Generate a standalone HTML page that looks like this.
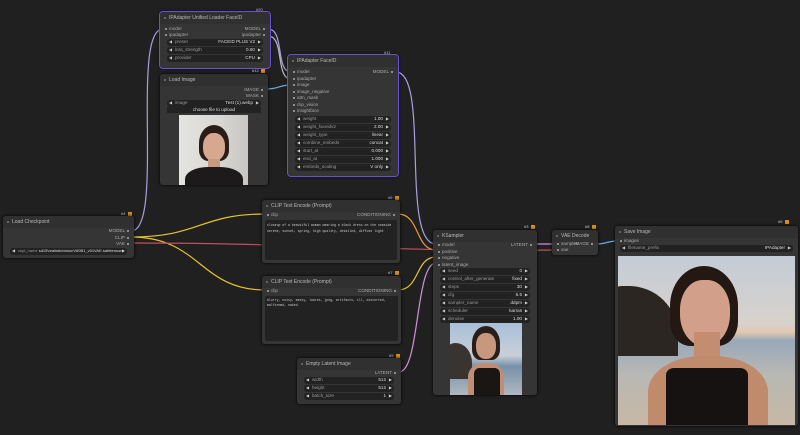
<!DOCTYPE html>
<html><head><meta charset="utf-8"><style>
*{margin:0;padding:0;box-sizing:border-box}
body{width:800px;height:435px;background:#202020;overflow:hidden;position:relative;font-family:"Liberation Sans",sans-serif;font-size:4.6px;color:#aaa}
.n{position:absolute;background:#353535;border-radius:3px;box-shadow:0 0 3px #000}
.n.sel{outline:1.5px solid #6b4fd8}
.t{height:12px;line-height:12px;padding-left:9px;color:#b8b8b8;font-size:5px;position:relative;background:#303030;border-radius:3px 3px 0 0}
.t:before{content:"";position:absolute;left:4px;top:5px;width:2px;height:2px;background:#777;border-radius:50%}
.r{position:absolute;left:0;right:0;height:6px;line-height:6px}
.in{position:absolute;left:5px;padding-left:4px}
.in:before{content:"";position:absolute;left:0;top:2px;width:2px;height:2px;background:#aaa;border-radius:50%}
.out{position:absolute;right:5px;padding-right:4px}
.out:after{content:"";position:absolute;right:0;top:2px;width:2px;height:2px;background:#aaa;border-radius:50%}
.w{position:absolute;left:7px;right:7px;height:6.5px;line-height:6.5px;background:#222;border-radius:3px;padding:0 8px;color:#999;white-space:nowrap;overflow:hidden}
.w:before{content:"◀";position:absolute;left:2px;font-size:4px;color:#ccc}
.w:after{content:"▶";position:absolute;right:2px;font-size:4px;color:#ccc}
.w b{position:absolute;right:8px;font-weight:normal;color:#ddd}
.id{position:absolute;font-size:4px;color:#ccc}
.id i{display:inline-block;width:4px;height:4px;background:#d98c1a;margin-left:1px;vertical-align:middle}
.ta{position:absolute;left:3px;right:3px;background:#222;font-family:"Liberation Mono",monospace;font-size:3.2px;color:#ccc;padding:2px;line-height:6px;border-radius:2px;white-space:nowrap;overflow:hidden}
</style></head><body>
<svg width="800" height="435" style="position:absolute;left:0;top:0" fill="none" stroke-width="1.2">
<path d="M131 231 C165 231 130 29 163 29" stroke="#a8a0e0"/>
<path d="M268 29 C285 29 275 72 291 72" stroke="#a8a0e0"/>
<path d="M268 36 C285 36 275 79 291 79" stroke="#bbb"/>
<path d="M266 89 C280 89 278 85 291 85" stroke="#6aa8e0"/>
<path d="M396 72 C430 72 400 244 436 244" stroke="#a8a0e0"/>
<path d="M131 237 C200 237 200 214 265 214" stroke="#e8c430"/>
<path d="M131 237 C200 237 200 290 265 290" stroke="#e8c430"/>
<path d="M131 243 C300 243 400 252 555 250" stroke="#c05060"/>
<path d="M398 214 C420 214 415 250 436 250" stroke="#e8a030"/>
<path d="M398 290 C420 290 415 257 436 257" stroke="#e8c430"/>
<path d="M399 372 C420 372 415 263 436 263" stroke="#d090d8"/>
<path d="M535 244 L555 244" stroke="#d090d8"/>
<path d="M596 244 C608 244 606 241 618 241" stroke="#6aa8e0"/>
</svg>

<div class="id" style="left:256px;top:7px">#20</div>
<div class="n sel" style="left:160px;top:12px;width:110px;height:56px">
<div class="t">IPAdapter Unified Loader FaceID</div>
<div class="r" style="top:14px"><span class="in">model</span><span class="out">MODEL</span></div>
<div class="r" style="top:20px"><span class="in">ipadapter</span><span class="out">ipadapter</span></div>
<div class="w" style="top:27px">preset<b>FACEID PLUS V2</b></div>
<div class="w" style="top:35px">lora_strength<b>0.60</b></div>
<div class="w" style="top:43px">provider<b>CPU</b></div>
</div>

<div class="id" style="left:252px;top:68px">#12 <i></i></div>
<div class="n" style="left:160px;top:74px;width:108px;height:111px">
<div class="t">Load Image</div>
<div class="r" style="top:13px"><span class="out">IMAGE</span></div>
<div class="r" style="top:19px"><span class="out">MASK</span></div>
<div class="w" style="top:26px">image<b>Test (1).webp</b></div>
<div style="position:absolute;left:7px;right:7px;top:33px;height:6px;background:#222;color:#ddd;text-align:center;line-height:6px">choose file to upload</div>
<div style="position:absolute;left:19px;top:41px;width:69px;height:70px;background:linear-gradient(90deg,#e4e4e2,#d8d6d2 60%,#c8c6c2);overflow:hidden">
<div style="position:absolute;left:20px;top:10px;width:30px;height:36px;background:#2a1c18;border-radius:50% 50% 30% 30%"></div>
<div style="position:absolute;left:24px;top:18px;width:22px;height:28px;background:#d6a890;border-radius:45%"></div>
<div style="position:absolute;left:29px;top:44px;width:12px;height:10px;background:#c99a82"></div>
<div style="position:absolute;left:6px;top:52px;width:58px;height:30px;background:#1c1a1a;border-radius:40% 40% 0 0"></div>
</div></div>

<div class="id" style="left:384px;top:50px">#11</div>
<div class="n sel" style="left:288px;top:55px;width:110px;height:121px">
<div class="t">IPAdapter FaceID</div>
<div class="r" style="top:14px"><span class="in">model</span><span class="out">MODEL</span></div>
<div class="r" style="top:20.5px"><span class="in">ipadapter</span></div>
<div class="r" style="top:27px"><span class="in">image</span></div>
<div class="r" style="top:33.5px"><span class="in">image_negative</span></div>
<div class="r" style="top:40px"><span class="in">attn_mask</span></div>
<div class="r" style="top:46.5px"><span class="in">clip_vision</span></div>
<div class="r" style="top:53px"><span class="in">insightface</span></div>
<div class="w" style="top:61px">weight<b>1.00</b></div>
<div class="w" style="top:69px">weight_faceidv2<b>2.00</b></div>
<div class="w" style="top:77px">weight_type<b>linear</b></div>
<div class="w" style="top:85px">combine_embeds<b>concat</b></div>
<div class="w" style="top:93px">start_at<b>0.000</b></div>
<div class="w" style="top:101px">end_at<b>1.000</b></div>
<div class="w" style="top:109px">embeds_scaling<b>V only</b></div>
</div>

<div class="id" style="left:121px;top:211px">#4 <i></i></div>
<div class="n" style="left:3px;top:216px;width:131px;height:42px">
<div class="t">Load Checkpoint</div>
<div class="r" style="top:12px"><span class="out">MODEL</span></div>
<div class="r" style="top:18.5px"><span class="out">CLIP</span></div>
<div class="r" style="top:25px"><span class="out">VAE</span></div>
<div class="w" style="top:32px;font-size:4px">ckpt_name <span style="color:#ddd">sd15\realistic\visionV60B1_v51VAE.safetensors</span></div>
</div>

<div class="id" style="left:388px;top:195px">#6 <i></i></div>
<div class="n" style="left:262px;top:200px;width:138px;height:63px">
<div class="t">CLIP Text Encode (Prompt)</div>
<div class="r" style="top:12px"><span class="in">clip</span><span class="out">CONDITIONING</span></div>
<div class="ta" style="top:20px;height:40px">closeup of a beautiful woman wearing a black dress on the seaside<br>serene, sunset, spring, high quality, detailed, diffuse light</div>
</div>

<div class="id" style="left:388px;top:270px">#7 <i></i></div>
<div class="n" style="left:262px;top:276px;width:139px;height:68px">
<div class="t">CLIP Text Encode (Prompt)</div>
<div class="r" style="top:12px"><span class="in">clip</span><span class="out">CONDITIONING</span></div>
<div class="ta" style="top:20px;height:45px;line-height:5px">blurry, noisy, messy, lowres, jpeg, artifacts, ill, distorted,<br>malformed, naked</div>
</div>

<div class="id" style="left:389px;top:353px">#5 <i></i></div>
<div class="n" style="left:297px;top:358px;width:104px;height:46px">
<div class="t">Empty Latent Image</div>
<div class="r" style="top:12px"><span class="out">LATENT</span></div>
<div class="w" style="top:19px">width<b>512</b></div>
<div class="w" style="top:27px">height<b>512</b></div>
<div class="w" style="top:35px">batch_size<b>1</b></div>
</div>

<div class="id" style="left:524px;top:224px">#3 <i></i></div>
<div class="n" style="left:433px;top:230px;width:104px;height:165px">
<div class="t">KSampler</div>
<div class="r" style="top:12px"><span class="in">model</span><span class="out">LATENT</span></div>
<div class="r" style="top:18.5px"><span class="in">positive</span></div>
<div class="r" style="top:25px"><span class="in">negative</span></div>
<div class="r" style="top:31.5px"><span class="in">latent_image</span></div>
<div class="w" style="top:38px">seed<b>0</b></div>
<div class="w" style="top:46px">control_after_generate<b>fixed</b></div>
<div class="w" style="top:54px">steps<b>30</b></div>
<div class="w" style="top:62px">cfg<b>6.5</b></div>
<div class="w" style="top:70px">sampler_name<b>ddpm</b></div>
<div class="w" style="top:78px">scheduler<b>karras</b></div>
<div class="w" style="top:86px">denoise<b>1.00</b></div>
<div style="position:absolute;left:17px;top:93px;width:72px;height:72px;background:linear-gradient(#a8bfd8,#c8d0d8 45%,#7890a8 60%,#b0b8c0);overflow:hidden">
<div style="position:absolute;left:-8px;top:20px;width:30px;height:36px;background:#3a3430;border-radius:50% 60% 0 0"></div>
<div style="position:absolute;left:22px;top:3px;width:28px;height:34px;background:#2a1e1a;border-radius:50% 50% 30% 30%"></div>
<div style="position:absolute;left:26px;top:10px;width:20px;height:26px;background:#c8987e;border-radius:45%"></div>
<div style="position:absolute;left:18px;top:40px;width:36px;height:35px;background:#c08e74;border-radius:40% 40% 0 0"></div>
<div style="position:absolute;left:24px;top:45px;width:26px;height:30px;background:#1a1614;border-radius:20% 20% 0 0"></div>
</div></div>

<div class="id" style="left:585px;top:224px">#8 <i></i></div>
<div class="n" style="left:552px;top:230px;width:46px;height:25px">
<div class="t">VAE Decode</div>
<div class="r" style="top:11px"><span class="in">samples</span><span class="out">IMAGE</span></div>
<div class="r" style="top:17px"><span class="in">vae</span></div>
</div>

<div class="id" style="left:778px;top:219px">#9 <i></i></div>
<div class="n" style="left:615px;top:226px;width:183px;height:200px">
<div class="t">Save Image</div>
<div class="r" style="top:12px"><span class="in">images</span></div>
<div class="w" style="top:19px;left:5px;right:5px">filename_prefix<b>IPAdapter</b></div>
<div style="position:absolute;left:3px;top:30px;width:177px;height:169px;background:linear-gradient(#c4ccd6,#d8d2cc 40%,#e2c8b0 45%,#98a8b8 50%,#b8b8b4 70%,#c8b8a4);overflow:hidden">
<div style="position:absolute;left:-10px;top:30px;width:70px;height:70px;background:#2c2622;border-radius:20% 70% 0 0"></div>
<div style="position:absolute;left:52px;top:10px;width:68px;height:80px;background:#231812;border-radius:50% 50% 30% 30%"></div>
<div style="position:absolute;left:62px;top:24px;width:50px;height:66px;background:#d2a08a;border-radius:45% 45% 48% 48%"></div>
<div style="position:absolute;left:76px;top:76px;width:26px;height:36px;background:#c48c70"></div>
<div style="position:absolute;left:30px;top:100px;width:120px;height:80px;background:#c08a6c;border-radius:45% 45% 0 0"></div>
<div style="position:absolute;left:48px;top:112px;width:82px;height:70px;background:#151211;border-radius:10% 10% 0 0"></div>
</div></div>
</body></html>
